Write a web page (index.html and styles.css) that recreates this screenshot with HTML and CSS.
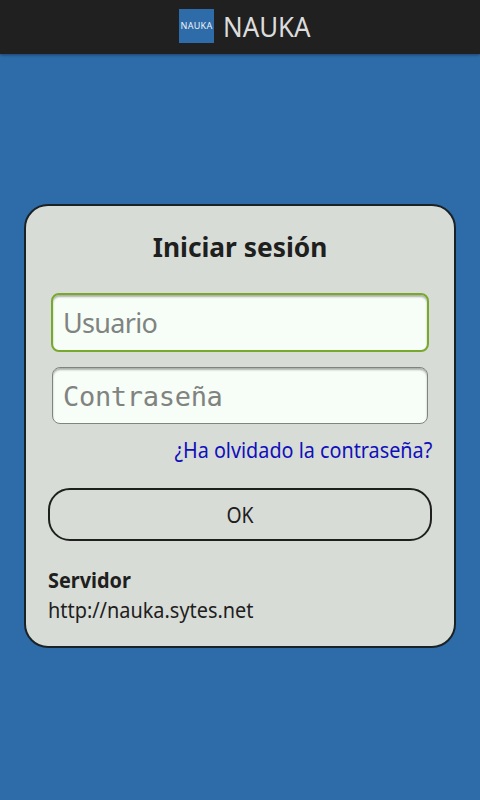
FILE: index.html
```html
<!DOCTYPE html>
<html lang="es">
<head>
    <meta charset="UTF-8">
    <meta name="viewport" content="width=device-width, initial-scale=1.0">
    <title>NAUKA</title>
    <link rel="stylesheet" href="styles.css">
</head>
<body>
    <header class="topbar">
        <span class="logo">NAUKA</span>
        <span class="app-name">NAUKA</span>
    </header>

    <main class="content">
        <form class="login">
            <h1>Iniciar sesión</h1>
            <input class="field active" type="text" name="user" placeholder="Usuario">
            <input class="field password" type="password" name="password" placeholder="Contraseña">
            <a class="forgot" href="#">¿Ha olvidado la contraseña?</a>
            <button class="ok" type="submit"><span class="ok-label">OK</span></button>
            <div class="server">
                <strong>Servidor</strong>
                <span class="url">http://nauka.sytes.net</span>
            </div>
        </form>
    </main>
</body>
</html>
```
FILE: styles.css
```css
* {
    box-sizing: border-box;
}
body {
    margin: 0;
    height: 800px;
    display: flex;
    flex-direction: column;
    background-color: #2e6ca9;
    color: #1e201e;
    font-family: "Noto Sans", sans-serif;
    overflow: hidden;
}
.topbar {
    height: 54px;
    display: flex;
    align-items: center;
    gap: 9px;
    padding-left: 179px;
    background-color: #202020;
    box-shadow: 0 1px 3px rgba(0, 0, 0, 0.4);
}
.logo {
    width: 35px;
    height: 34px;
    margin-bottom: 2px;
    background-color: #2e6ca9;
    color: #eef2f6;
    font-size: 9px;
    letter-spacing: 0.3px;
    line-height: 34px;
    text-align: center;
}
.app-name {
    color: #dcdcdc;
    font-size: 27.5px;
    line-height: 54px;
    transform: scaleX(0.94);
    transform-origin: left;
}
.content {
    flex: 1;
    padding: 150px 24px 0;
}
.login {
    height: 444px;
    display: flex;
    flex-direction: column;
    padding: 22px 22px 20px;
    background-color: #d8dcd6;
    border: 2px solid #1a2226;
    border-radius: 24px;
}
h1 {
    margin: 0 0 27px;
    text-align: center;
    font-size: 27px;
    line-height: 38px;
    transform: scaleX(0.975);
}
.field {
    height: 57px;
    margin: 0 4px;
    padding: 0 10px;
    background-color: #f7fdf7;
    border: 1px solid #808480;
    border-radius: 8px;
    box-shadow: inset 0 2px 2px rgba(0, 0, 0, 0.3);
    font-family: "Noto Sans", sans-serif;
    font-size: 27px;
    letter-spacing: -0.7px;
    outline: none;
}
.field::placeholder {
    color: #808380;
    opacity: 1;
}
.active {
    height: 59px;
    margin: 0 3px 15px;
    border: 2px solid #78a92d;
}
.password {
    padding-top: 2px;
    font-family: "DejaVu Sans Mono", monospace;
    letter-spacing: -0.3px;
}
.forgot {
    align-self: flex-end;
    margin-top: 11px;
    color: #1010bb;
    font-size: 21.5px;
    line-height: 30px;
    text-decoration: none;
    white-space: nowrap;
    transform: scaleX(0.92);
    transform-origin: right;
}
.ok {
    height: 53px;
    margin-top: 23px;
    background: none;
    border: 2px solid #1e201e;
    border-radius: 22px;
    color: #1e201e;
    font-family: "Noto Sans", sans-serif;
    font-size: 21.5px;
}
.ok-label {
    display: inline-block;
    transform: scaleX(0.9);
}
.server {
    display: flex;
    flex-direction: column;
    margin-top: 24px;
    font-size: 21.5px;
    line-height: 30px;
    transform: scaleX(0.925);
    transform-origin: left;
}
```
